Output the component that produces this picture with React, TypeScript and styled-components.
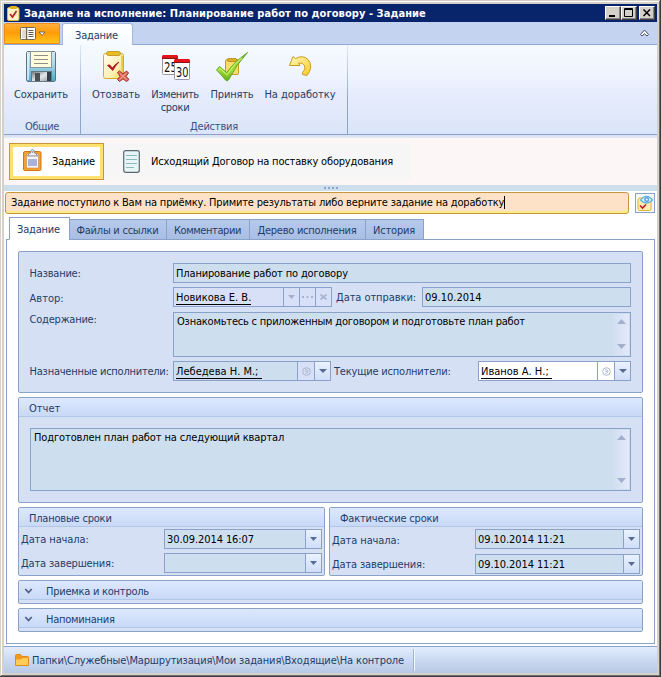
import React from "react";
import styled, { createGlobalStyle, css } from "styled-components";

const line = "#8aa2ca";
const ink = "#1f3d68";

const GlobalStyle = createGlobalStyle`
  * { box-sizing: border-box; }
  body { margin: 0; background: #d6d2ca; overflow: hidden; }
  svg { display: block; flex: none; }
`;

/* ---------- window ---------- */
const Window = styled.div`
  width: 661px;
  height: 677px;
  padding: 4px 4px 4px 4px;
  display: flex;
  flex-direction: column;
  background: #d5d1c9;
  box-shadow: inset -1px -1px 0 #3c3c3c, inset 1px 1px 0 #d5d1c9, inset -2px -2px 0 #6f6e6c,
    inset 2px 2px 0 #ffffff;
  font: 11px/13px "DejaVu Sans Condensed", "DejaVu Sans", sans-serif;
  font-stretch: condensed;
  color: ${ink};
`;

const Text = styled.span<{ $ls?: number; $black?: boolean; $link?: boolean }>`
  white-space: pre;
  letter-spacing: ${(p) => p.$ls ?? 0}px;
  ${(p) => p.$black && css`color: #000;`}
  ${(p) => p.$link && css`border-bottom: 1px solid #000; line-height: 12px;`}
`;

const TitleBar = styled.header`
  height: 18px;
  display: flex;
  align-items: center;
  padding: 0 2px 0 3px;
  background: #08246b;
  color: #fff;
  font-weight: 700;
`;
const TitleText = styled.div`
  flex: 1;
  padding-left: 4px;
`;
const CaptionButton = styled.button<{ $gap?: boolean }>`
  width: 16px;
  height: 14px;
  padding: 0;
  margin-left: ${(p) => (p.$gap ? 2 : 0)}px;
  border: 1px solid;
  border-color: #fff #404040 #404040 #fff;
  box-shadow: inset -1px -1px 0 #848284;
  background: #d5d1c9;
`;

/* ---------- ribbon ---------- */
const RibbonTabs = styled.div`
  height: 23px;
  flex: none;
  display: flex;
  align-items: flex-end;
  background: #c4d3ef;
  border-bottom: 1px solid #8fa9d3;
`;
const AppButton = styled.button`
  width: 56px;
  height: 21px;
  padding: 0 0 0 15px;
  display: flex;
  align-items: center;
  gap: 2px;
  border: 1px solid #ee8c1c;
  border-radius: 2px 2px 0 0;
  background: linear-gradient(#ffb03a, #ff9c08 45%, #ffa60c 60%, #ffc21c);
`;
const RibbonTab = styled.div`
  width: 71px;
  height: 22px;
  margin: 0 auto -1px 2px;
  padding: 5px 2px 0 0;
  text-align: center;
  background: linear-gradient(#ffffff, #f6faff);
  border: 1px solid #a3b8de;
  border-bottom: 0;
  border-radius: 3px 3px 0 0;
`;
const CollapseMark = styled.div`
  padding: 0 8px 7px 0;
`;
const Ribbon = styled.div`
  height: 90px;
  flex: none;
  display: flex;
  background: linear-gradient(#f5faff, #f0f5ff 30%, #e7ecfc 55%, #dae5f9);
  border-bottom: 1px solid ${line};
`;
const RibbonGroup = styled.section<{ $w: number }>`
  width: ${(p) => p.$w}px;
  display: flex;
  flex-direction: column;
  justify-content: space-between;
  padding-bottom: 1px;
  border-right: 1px solid;
  border-image: linear-gradient(#e3ebf9, #8fa6cc 60%) 1;
  text-align: center;
`;
const RibbonItems = styled.div`
  display: flex;
  padding: 5px 0 0 5px;
`;
const RibbonButton = styled.div<{ $w: number }>`
  width: ${(p) => p.$w}px;
  display: flex;
  flex-direction: column;
  align-items: center;
  white-space: nowrap;
  svg { margin-bottom: 6px; }
`;
const GroupCaption = styled.div`
  color: #3a5280;
`;

/* ---------- document switcher ---------- */
const Switcher = styled.nav`
  height: 50px;
  flex: none;
  display: flex;
  align-items: flex-start;
  padding: 8px 0 0 5px;
  background: linear-gradient(#d7e0f2, #e6e9f3 3px, #fcf6f6 3px);
`;
const SwitchItem = styled.div<{ $w: number; $active?: boolean }>`
  width: ${(p) => p.$w}px;
  height: 37px;
  display: flex;
  align-items: center;
  color: #000;
  background: #f6f6f6;
  padding-left: 19px;
  gap: 11px;
  ${(p) =>
    p.$active &&
    css`
      padding-left: 13px;
      gap: 10px;
      background: #fff;
      border: 1px solid #c8943c;
      box-shadow: inset 0 0 0 3px #ffe070;
      svg { margin-top: -3px; }
    `}
`;
const Splitter = styled.div`
  height: 6px;
  flex: none;
  display: flex;
  justify-content: center;
  align-items: center;
  gap: 2px;
  background: #cddeed;
  i { width: 2px; height: 2px; background: #8ba4c8; }
`;

/* ---------- work area ---------- */
const Work = styled.main`
  flex: 1;
  display: flex;
  flex-direction: column;
  background: #fff;
  padding: 1px 2px 2px;
`;
const NoticeRow = styled.div`
  display: flex;
  align-items: center;
  gap: 6px;
  margin-left: -1px;
`;
const Notice = styled.div`
  width: 625px;
  height: 22px;
  display: flex;
  align-items: center;
  padding: 0 0 2px 5px;
  border: 1px solid #c8963f;
  border-radius: 3px;
  background: #fee2c7;
  box-shadow: inset 0 -2px 0 #fdec8c;
`;
const Caret = styled.i`
  width: 1px;
  height: 13px;
  background: #000;
`;
const WatchButton = styled.button`
  width: 20px;
  height: 20px;
  padding: 1px;
  border: 1px solid #8aa2ca;
  background: #f7f9fe;
`;
const Tabs = styled.div`
  display: flex;
  align-items: flex-end;
  height: 23px;
  margin: 3px 0 -1px 3px;
  z-index: 1;
`;
const Tab = styled.div<{ $w: number; $active?: boolean }>`
  width: ${(p) => p.$w}px;
  height: 21px;
  margin-left: -1px;
  text-align: center;
  padding: 4px 1px 0 0;
  border: 1px solid ${line};
  background: linear-gradient(#b5c9ea, #a8bee3);
  ${(p) =>
    p.$active &&
    css`
      height: 23px;
      margin-left: 0;
      padding: 5px 2px 0 0;
      background: #fff;
      border-bottom-color: #fff;
    `}
`;
const Page = styled.div`
  height: 405px;
  width: 649px;
  padding: 11px;
  border: 1px solid ${line};
  display: flex;
  flex-direction: column;
  gap: 4px;
`;
const Box = styled.section<{ $h: number; $w?: number }>`
  height: ${(p) => p.$h}px;
  width: ${(p) => p.$w ?? 625}px;
  flex: none;
  border: 1px solid ${line};
  border-radius: 2px;
  background: #d5e0f5;
`;
const BoxHead = styled.div<{ $fold?: boolean }>`
  height: 19px;
  display: flex;
  align-items: center;
  gap: 13px;
  padding: 2px 0 0 ${(p) => (p.$fold ? 5 : 10)}px;
  border-bottom: 1px solid #b0c7ea;
  background: linear-gradient(#dde8fe, #c8d9f7);
`;
const Details = styled.div`
  display: flex;
  flex-direction: column;
  gap: 4px;
  padding: 11px 11px 0 10px;
`;
const Row = styled.div<{ $top?: number }>`
  display: flex;
  align-items: flex-start;
  margin-top: ${(p) => p.$top ?? 0}px;
`;
const Label = styled.label<{ $w: number; $y?: number; $x?: number }>`
  width: ${(p) => p.$w}px;
  flex: none;
  padding: ${(p) => p.$y ?? 4}px 0 0 ${(p) => p.$x ?? 0.6}px;
`;
const Field = styled.div<{ $w?: number; $tone?: "plain" | "white" }>`
  ${(p) => (p.$w ? css`width: ${p.$w}px;` : css`flex: 1;`)}
  height: 20px;
  display: flex;
  border: 1px solid ${line};
  background: ${(p) => (p.$tone === "white" ? "#fff" : p.$tone === "plain" ? "#d7e0f7" : "#cddfee")};
`;
const Value = styled.div`
  flex: 1;
  padding: 4px 0 0 2px;
  line-height: 12px;
`;
const Slot = styled.span<{ $w?: number; $live?: boolean; $white?: boolean }>`
  width: ${(p) => p.$w ?? 16}px;
  display: flex;
  align-items: center;
  justify-content: center;
  border-left: 1px solid ${line};
  background: ${(p) => (p.$white ? "#fff" : p.$live ? "linear-gradient(#eaf1ff, #cfdef8)" : "#d7e0f7")};
`;
const Area = styled.div<{ $h: number; $pad: number }>`
  flex: 1;
  height: ${(p) => p.$h}px;
  display: flex;
  justify-content: space-between;
  padding: 1px 1px 1px ${(p) => p.$pad}px;
  border: 1px solid ${line};
  background: #cddfee;
`;
const AreaText = styled.div`
  padding-top: 1px;
`;
const Scroll = styled.div`
  width: 16px;
  display: flex;
  flex-direction: column;
  justify-content: space-between;
  align-items: center;
  padding: 5px 0 6px;
  background: linear-gradient(90deg, #d3def1, #e2e9fb);
`;
const Report = styled.div`
  display: flex;
  padding: 11px 11px 0;
`;
const Pair = styled.div`
  display: flex;
  justify-content: space-between;
`;
const Dates = styled.div<{ $gap: number }>`
  display: flex;
  flex-direction: column;
  gap: ${(p) => p.$gap}px;
  padding: 2px 2px 0 1px;
`;
const StatusBar = styled.footer`
  height: 27px;
  flex: none;
  display: flex;
  align-items: center;
  padding-left: 11px;
  gap: 3px;
  border-top: 1px solid ${line};
  background: linear-gradient(#e3edfe, #cddbf2 45%, #b7c9e5);
`;
const StatusDivider = styled.i`
  width: 2px;
  height: 22px;
  margin-left: 6px;
  border-left: 1px solid #9fb3d6;
  background: #f2f6fe;
`;

/* ---------- drawings ---------- */
const Tri = ({ up, dim, w = 7 }: { up?: boolean; dim?: boolean; w?: number }) => (
  <svg width={w} height={w > 8 ? 5 : 4} viewBox="0 0 8 4" preserveAspectRatio="none">
    <path d={up ? "M0 4 L4 0 L8 4Z" : "M0 0 L8 0 L4 4Z"} fill={dim ? "#a3afcd" : "#586b92"} />
  </svg>
);
const Help = () => (
  <svg width="9" height="9" viewBox="0 0 9 9" fill="none" stroke="#a9b4d0">
    <circle cx="4.5" cy="4.5" r="3.8" />
    <path d="M3 2.800 H4.500 Q5.800 3.200 5.800 4.500 Q5.800 5.800 4.500 6.300 H3.500 M3.500 4.500H5" />
  </svg>
);
const Dots = () => (
  <svg width="11" height="3"><path d="M0 0h2v2H0zM4.500 0h2v2h-2zM9 0h2v2H9z" fill="#a9b4d0" /></svg>
);
const Cross = () => (
  <svg width="7" height="6"><path d="M.5 .5 L6.500 5.500 M6.500 .5 L.5 5.500" stroke="#a9b4d0" strokeWidth="1.7" /></svg>
);
const Fold = () => (
  <svg width="9" height="7" viewBox="0 0 9 7" fill="none" stroke="#4f618a" strokeWidth="1.8">
    <path d="M1.300 1 L4.500 4.500 L7.700 1" />
  </svg>
);
const ClipCheck = () => (
  <svg width="13" height="15" viewBox="0 0 13 15">
    <rect x=".5" y="1.500" width="11.500" height="13" rx="1.500" fill="#fdf3c4" stroke="#d9b545" />
    <rect x="3" y="0" width="7" height="3" rx="1" fill="#e2b21e" />
    <path d="M3 8 L5.500 11 L9.500 5" fill="none" stroke="#b9202c" strokeWidth="1.7" />
  </svg>
);
const Floppy = () => (
  <svg width="32" height="32" viewBox="0 0 32 32">
    <defs>
      <linearGradient id="fl" x1="0" y1="0" x2="0" y2="1">
        <stop offset="0" stopColor="#d4e9f2" /><stop offset=".45" stopColor="#a4d6ea" /><stop offset="1" stopColor="#4fa3ca" />
      </linearGradient>
      <linearGradient id="sh" x1="0" y1="0" x2="1" y2="1">
        <stop offset="0" stopColor="#6d7378" /><stop offset=".5" stopColor="#e4e8ea" /><stop offset="1" stopColor="#8c9499" />
      </linearGradient>
    </defs>
    <path d="M1.500 2.500 L2.500 1.500 H29.500 L30.500 2.500 V30.500 L29.500 31.500 H2.500 L1.500 30.500Z" fill="url(#fl)" stroke="#5e7280" />
    <path d="M3 3V30" stroke="#e2f6fc" strokeWidth="1.500" />
    <rect x="5.500" y="1.500" width="21" height="16" fill="#fffcdc" stroke="#8797a0" />
    <path d="M9 5.500H23M9 9.500H23M9 13.500H23" stroke="#8d9089" />
    <rect x="6.500" y="21.500" width="20" height="10" fill="url(#sh)" stroke="#667880" />
    <rect x="10" y="23" width="5" height="8" fill="#4b5055" />
    <rect x="22" y="22" width="4" height="9" fill="#33404a" />
  </svg>
);
const Revoke = () => (
  <svg width="32" height="32" viewBox="0 0 32 32">
    <defs>
      <linearGradient id="pg" x1="0" y1="0" x2="1" y2="1">
        <stop offset="0" stopColor="#fffdf0" /><stop offset=".6" stopColor="#fcf0b4" /><stop offset="1" stopColor="#f3d964" />
      </linearGradient>
    </defs>
    <rect x="3.500" y="3.500" width="20" height="25" rx="2" fill="url(#pg)" stroke="#d2a93b" />
    <path d="M21 5 L23 6V26H21.500Z" fill="#edc849" />
    <rect x="6.500" y="1.500" width="14" height="4" rx="2" fill="#e9bd20" stroke="#b98c12" strokeWidth=".8" />
    <path d="M7.500 15.500 L9.500 14.800 L12.500 18 Q15 14 19 12 Q15 16 12.800 20.500 Z" fill="#c31727" stroke="#a31322" strokeWidth=".8" />
    <path d="M17.500 22.500 L19.500 21 L23 24 L26.500 21 L28.500 23 L26 26.300 L29 29.500 L26.500 31.500 L23 28.800 L19.500 31.500 L17.500 29.500 L20 26.300Z" fill="#e2705f" stroke="#a62a23" />
    <path d="M20 23.500 L26.500 29.500 M26.500 23 L20 29.500" stroke="#f3a596" />
  </svg>
);
const Digits = styled.text`
  font: 14px "DejaVu Sans Condensed", "DejaVu Sans", sans-serif;
  fill: #111;
`;
const Calendars = () => (
  <svg width="32" height="32" viewBox="0 0 32 32">
    <rect x="3.500" y="6.500" width="15" height="18" rx="1" fill="#fff" stroke="#9b989f" />
    <path d="M3 9V6L4 5H18L19 6V9Z" fill="#e3131c" /><path d="M3 8.500H19" stroke="#8a1118" />
    <Digits x="5" y="22" textLength="13" lengthAdjust="spacingAndGlyphs">25</Digits>
    <rect x="15.500" y="10.500" width="15" height="19" rx="1" fill="#fff" stroke="#9b989f" />
    <path d="M15 13V10L16 9H30L31 10V13Z" fill="#e3131c" /><path d="M15 12.500H31" stroke="#8a1118" />
    <Digits x="17" y="26.500" textLength="12.500" lengthAdjust="spacingAndGlyphs">30</Digits>
  </svg>
);
const Accept = () => (
  <svg width="32" height="32" viewBox="0 0 32 32">
    <defs>
      <linearGradient id="gr" x1="0" y1="0" x2="0" y2="1">
        <stop offset="0" stopColor="#68bd2c" /><stop offset=".6" stopColor="#a5dd3a" /><stop offset="1" stopColor="#62ae18" />
      </linearGradient>
    </defs>
    <rect x="9.500" y="9.500" width="13" height="15" rx="1.500" fill="#f7dd6c" stroke="#c99a25" />
    <rect x="11.500" y="8.500" width="9" height="3" rx="1" fill="#dcae20" stroke="#ae8414" strokeWidth=".8" />
    <path d="M0.500 20 L3.500 16.500 L10.500 22.500 Q19 11 31.500 2.500 Q20 15 12.500 30 L11 31 L9.500 30 Q5.500 25 0.500 20Z" fill="url(#gr)" stroke="#5ba21c" strokeWidth=".9" />
    <path d="M2.500 20 L4 18.400 L11 25 Q18 14 26 8" fill="none" stroke="#c4ee6c" strokeWidth="1.100" />
  </svg>
);
const Rework = () => (
  <svg width="32" height="32" viewBox="0 0 32 32">
    <defs>
      <linearGradient id="rw" x1="0" y1="0" x2="1" y2="1">
        <stop offset="0" stopColor="#fff8c0" /><stop offset="1" stopColor="#fbcb20" />
      </linearGradient>
    </defs>
    <path d="M5.500 15.500 L9 6.500 L11.500 8.500 Q19 4.500 24 9.500 Q28.500 15 25.500 21.500 L23 25.500 L18.500 24.500 V22.500 Q22.500 19 20.500 15.500 Q18.500 12.300 14.500 13 L16 15.500Z" fill="url(#rw)" stroke="#cc9a1b" strokeLinejoin="round" />
  </svg>
);
const AppMenu = () => (
  <svg width="16" height="14" viewBox="0 0 16 14">
    <rect x=".5" y=".5" width="15" height="12" rx="1" fill="#fff" stroke="#76684e" />
    <path d="M6.500 1V13" stroke="#76684e" strokeWidth="1.500" /><path d="M2 2.500h3v8.500H2z" fill="#e3dccd" />
    <path d="M8.500 3.500H13.500M8.500 5.500H13.500M8.500 7.500H13.500M8.500 9.500H13.500" stroke="#655a48" />
  </svg>
);
const TaskIcon = () => (
  <svg width="19" height="22" viewBox="0 0 19 22">
    <rect x=".5" y="2.500" width="17.500" height="19" rx="1.500" fill="#f5a032" stroke="#cf7716" />
    <rect x="3.500" y="5" width="12" height="14" fill="#f7f5fb" stroke="#c98736" strokeWidth=".6" />
    <rect x="5" y="10" width="9" height="7" fill="#a9b2d8" />
    <path d="M4.500 7 L6.500 4 H7.500 Q7.500 .5 9.500 .5 Q11.500 .5 11.500 4 H12.500 L14.500 7Z" fill="#eceef0" stroke="#7c8084" strokeWidth=".9" />
    <circle cx="9.500" cy="3" r=".8" fill="#7c8084" />
  </svg>
);
const DocIcon = () => (
  <svg width="17" height="23" viewBox="0 0 17 23">
    <rect x=".7" y=".7" width="15.600" height="21.600" rx="2" fill="#e6f6f6" stroke="#5c686e" strokeWidth="1.200" />
    <path d="M3 5.500H14M3 9.500H14M3 13.500H14M3 17.500H11" stroke="#8fb9b5" />
  </svg>
);
const Watch = () => (
  <svg width="16" height="16" viewBox="0 0 16 16">
    <rect x="1" y="3" width="13" height="12.500" rx="1.500" fill="#fbeeb0" stroke="#dbb23a" />
    <path d="M3 10.500 L5.500 13 L9 9.500" fill="none" stroke="#c31727" strokeWidth="1.600" />
    <path d="M3.500 5 Q9.500 -2.500 15.700 5 Q9.500 11 3.500 5Z" fill="#e3f4fe" stroke="#5aaede" strokeWidth="1.200" />
    <circle cx="9.700" cy="4.600" r="2.500" fill="#4da4e0" /><circle cx="9.700" cy="4.600" r="1" fill="#fff" />
  </svg>
);
const Folder = () => (
  <svg width="14" height="12" viewBox="0 0 14 12">
    <path d="M.5 1.500 Q.5 .5 1.500 .5 H5.500 L7 2.500 H12.500 Q13.500 2.500 13.500 3.500 V11.500 H.5Z" fill="#f29a1c" stroke="#e28c18" />
    <path d="M1 11 V5.500 H6 L7.500 4 H13 V11Z" fill="#ffcd55" />
  </svg>
);

type DateRowProps = { label: string; ls: number; value: string; fieldW: number; y?: number };
const DateRow = ({ label, ls, value, fieldW, y = 4 }: DateRowProps) => (
  <Row>
    <Label $w={144} $y={y} $x={1}><Text $ls={ls}>{label}</Text></Label>
    <Field $w={fieldW}>
      <Value><Text $black $ls={-0.08}>{value}</Text></Value>
      <Slot $live><Tri /></Slot>
    </Field>
  </Row>
);

export default function App() {
  return (
    <Window>
      <GlobalStyle />
      <TitleBar>
        <ClipCheck />
        <TitleText><Text $ls={0.06}>Задание на исполнение: Планирование работ по договору - Задание</Text></TitleText>
        <CaptionButton><svg width="14" height="12"><path d="M3 8H9V10H3Z" /></svg></CaptionButton>
        <CaptionButton><svg width="14" height="12"><path d="M2.500 1.500H10.500V9.500H2.500Z M2.500 2.500H10.500" fill="none" stroke="#000" /></svg></CaptionButton>
        <CaptionButton $gap><svg width="14" height="12"><path d="M3.500 2.500 L10 9 M10 2.500 L3.500 9" stroke="#000" strokeWidth="1.500" /></svg></CaptionButton>
      </TitleBar>
      <RibbonTabs>
        <AppButton>
          <AppMenu />
          <svg width="8" height="6"><path d="M1 1H7L4 4.500Z" fill="#fff" stroke="#76684e" /></svg>
        </AppButton>
        <RibbonTab><Text $ls={-0.19}>Задание</Text></RibbonTab>
        <CollapseMark>
          <svg width="9" height="8"><path d="M.5 5.500 L4.500 1 L8.500 5.500 L7 7 L4.500 4.800 L2 7Z" fill="#fff" stroke="#4a4a62" /></svg>
        </CollapseMark>
      </RibbonTabs>
      <Ribbon>
        <RibbonGroup $w={77}>
          <RibbonItems><RibbonButton $w={64}><Floppy /><Text $ls={-0.19}>Сохранить</Text></RibbonButton></RibbonItems>
          <GroupCaption><Text $ls={-0.35}>Общие</Text></GroupCaption>
        </RibbonGroup>
        <RibbonGroup $w={267}>
          <RibbonItems>
            <RibbonButton $w={60}><Revoke /><Text $ls={-0.05}>Отозвать</Text></RibbonButton>
            <RibbonButton $w={58}><Calendars /><Text $ls={-0.4}>Изменить</Text><Text $ls={-0.34}>сроки</Text></RibbonButton>
            <RibbonButton $w={56}><Accept /><Text $ls={-0.17}>Принять</Text></RibbonButton>
            <RibbonButton $w={80}><Rework /><Text $ls={-0.05}>На доработку</Text></RibbonButton>
          </RibbonItems>
          <GroupCaption><Text $ls={-0.21}>Действия</Text></GroupCaption>
        </RibbonGroup>
      </Ribbon>
      <Switcher>
        <SwitchItem $w={95} $active><TaskIcon /><Text $ls={-0.19}>Задание</Text></SwitchItem>
        <SwitchItem $w={307}><DocIcon /><Text $ls={-0.18}>Исходящий Договор на поставку оборудования</Text></SwitchItem>
      </Switcher>
      <Splitter><i /><i /><i /><i /></Splitter>
      <Work>
        <NoticeRow>
          <Notice>
            <Text $black $ls={-0.18}>Задание поступило к Вам на приёмку. Примите результаты либо верните задание на доработку</Text>
            <Caret />
          </Notice>
          <WatchButton><Watch /></WatchButton>
        </NoticeRow>
        <Tabs>
          <Tab $w={61} $active><Text $ls={-0.19}>Задание</Text></Tab>
          <Tab $w={98}><Text $ls={-0.24}>Файлы и ссылки</Text></Tab>
          <Tab $w={84}><Text $ls={-0.41}>Комментарии</Text></Tab>
          <Tab $w={117}><Text $ls={-0.26}>Дерево исполнения</Text></Tab>
          <Tab $w={59}><Text $ls={-0.19}>История</Text></Tab>
        </Tabs>
        <Page>
          <Box $h={142}>
            <Details>
              <Row>
                <Label $w={144}><Text $ls={-0.22}>Название:</Text></Label>
                <Field><Value><Text $black $ls={-0.15}>Планирование работ по договору</Text></Value></Field>
              </Row>
              <Row>
                <Label $w={144} $y={5}><Text>Автор:</Text></Label>
                <Field $w={159} $tone="plain">
                  <Value><Text $black $link>Новикова Е. В.</Text></Value>
                  <Slot><Tri dim /></Slot><Slot><Dots /></Slot><Slot><Cross /></Slot>
                </Field>
                <Label $w={90} $x={4}><Text $ls={-0.07}>Дата отправки:</Text></Label>
                <Field><Value><Text $black>09.10.2014</Text></Value></Field>
              </Row>
              <Row $top={1}>
                <Label $w={144} $y={1}><Text $ls={-0.23}>Содержание:</Text></Label>
                <Area $h={45} $pad={3}>
                  <AreaText><Text $black $ls={-0.2}>Ознакомьтесь с приложенным договором и подготовьте план работ</Text></AreaText>
                  <Scroll><Tri up dim w={9} /><Tri dim w={9} /></Scroll>
                </Area>
              </Row>
              <Row>
                <Label $w={144}><Text $ls={-0.24}>Назначенные исполнители:</Text></Label>
                <Field $w={158}>
                  <Value><Text $black $link>Лебедева Н. М.; </Text></Value>
                  <Slot $w={17}><Help /></Slot><Slot $live><Tri w={8} /></Slot>
                </Field>
                <Label $w={147} $x={3}><Text $ls={-0.2}>Текущие исполнители:</Text></Label>
                <Field $tone="white">
                  <Value><Text $black $link>Иванов А. Н.; </Text></Value>
                  <Slot $w={17} $white><Help /></Slot><Slot $live><Tri w={8} /></Slot>
                </Field>
              </Row>
            </Details>
          </Box>
          <Box $h={106}>
            <BoxHead><Text>Отчет</Text></BoxHead>
            <Report>
              <Area $h={63} $pad={3}>
                <AreaText><Text $black $ls={-0.12}>Подготовлен план работ на следующий квартал</Text></AreaText>
                <Scroll><Tri up dim w={9} /><Tri dim w={9} /></Scroll>
              </Area>
            </Report>
          </Box>
          <Pair>
            <Box $h={69} $w={307}>
              <BoxHead><Text $ls={-0.2}>Плановые сроки</Text></BoxHead>
              <Dates $gap={4}>
                <DateRow label="Дата начала:" ls={-0.1} value="30.09.2014 16:07" fieldW={158} />
                <DateRow label="Дата завершения:" ls={-0.16} value="" fieldW={158} />
              </Dates>
            </Box>
            <Box $h={69} $w={314}>
              <BoxHead><Text $ls={-0.2}>Фактические сроки</Text></BoxHead>
              <Dates $gap={5}>
                <DateRow label="Дата начала:" ls={-0.1} value="09.10.2014 11:21" fieldW={165} y={5} />
                <DateRow label="Дата завершения:" ls={-0.16} value="09.10.2014 11:21" fieldW={165} />
              </Dates>
            </Box>
          </Pair>
          <Box $h={24}><BoxHead $fold><Fold /><Text $ls={-0.24}>Приемка и контроль</Text></BoxHead></Box>
          <Box $h={24}><BoxHead $fold><Fold /><Text $ls={-0.24}>Напоминания</Text></BoxHead></Box>
        </Page>
      </Work>
      <StatusBar>
        <Folder />
        <Text $ls={-0.14}>Папки\Служебные\Маршрутизация\Мои задания\Входящие\На контроле</Text>
        <StatusDivider />
      </StatusBar>
    </Window>
  );
}
